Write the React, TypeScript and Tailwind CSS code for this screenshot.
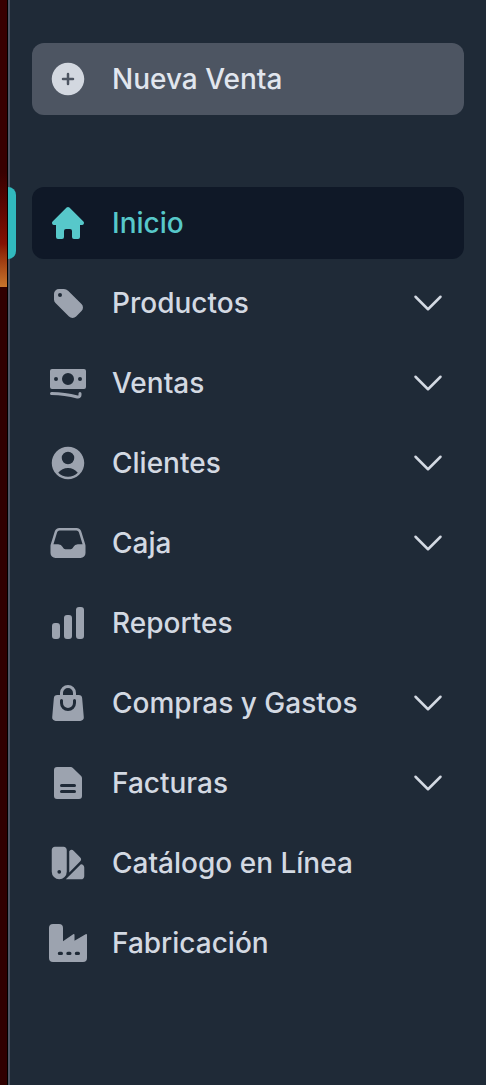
import { clsx } from "clsx";
import type { ComponentType } from "react";
import {
  HiInbox,
  HiMiniBanknotes,
  HiMiniChartBar,
  HiMiniDocumentText,
  HiMiniHome,
  HiMiniShoppingBag,
  HiOutlineChevronDown,
  HiPlusCircle,
  HiSwatch,
  HiUserCircle,
} from "react-icons/hi2";

type IconProps = { className?: string };

type NavItem = {
  label: string;
  icon: ComponentType<IconProps>;
  active?: boolean;
  expandable?: boolean;
};

function TagIcon({ className }: IconProps) {
  return (
    <svg viewBox="0 0 40 40" fill="currentColor" className={className} aria-hidden="true">
      <path
        fillRule="evenodd"
        clipRule="evenodd"
        d="M11 6h4.900a6 6 0 0 1 4.200 1.700L33.500 21a5 5 0 0 1 0 7.100l-5.400 5.400a5 5 0 0 1-7.100 0L7.500 20A5 5 0 0 1 6 16.500V11a5 5 0 0 1 5-5ZM12 14a2 2 0 1 0 0-4 2 2 0 0 0 0 4Z"
      />
    </svg>
  );
}

function FactoryIcon({ className }: IconProps) {
  return (
    <svg viewBox="0 0 40 40" fill="currentColor" className={className} aria-hidden="true">
      <path
        fillRule="evenodd"
        clipRule="evenodd"
        d="M5 1h6a4 4 0 0 1 4 4v13.300L25.200 11.300Q26.500 10.600 26.500 12v5.700L37.600 11.200Q39 10.500 39 12V35a4 4 0 0 1-4 4H5a4 4 0 0 1-4-4V5a4 4 0 0 1 4-4ZM11.400 28.800a1.600 1.600 0 0 0 0 3.200h2a1.600 1.600 0 0 0 0-3.200ZM19.900 28.800a1.600 1.600 0 0 0 0 3.200h2a1.600 1.600 0 0 0 0-3.200ZM28.400 28.800a1.600 1.600 0 0 0 0 3.200h2a1.600 1.600 0 0 0 0-3.200Z"
      />
    </svg>
  );
}

const items: NavItem[] = [
  { label: "Inicio", icon: HiMiniHome, active: true },
  { label: "Productos", icon: TagIcon, expandable: true },
  { label: "Ventas", icon: HiMiniBanknotes, expandable: true },
  { label: "Clientes", icon: HiUserCircle, expandable: true },
  { label: "Caja", icon: HiInbox, expandable: true },
  { label: "Reportes", icon: HiMiniChartBar },
  { label: "Compras y Gastos", icon: HiMiniShoppingBag, expandable: true },
  { label: "Facturas", icon: HiMiniDocumentText, expandable: true },
  { label: "Catálogo en Línea", icon: HiSwatch },
  { label: "Fabricación", icon: FactoryIcon },
];

function NavRow({ label, icon: Icon, active, expandable }: NavItem) {
  return (
    <li className="relative">
      {active && <span className="absolute -left-6 inset-y-0 w-2 rounded-r-lg bg-[#31b9bd]" />}
      <a
        href="#"
        aria-current={active ? "page" : undefined}
        className={clsx(
          "flex h-18 items-center rounded-xl px-4",
          active ? "bg-[#0f1827] text-[#57c8ca]" : "text-[#d3d9e2]"
        )}
      >
        <Icon className={clsx("size-10 shrink-0", !active && "text-[#9ca3af]")} />
        <span className="ml-6 flex-1">{label}</span>
        {expandable && <HiOutlineChevronDown className="size-10 shrink-0" />}
      </a>
    </li>
  );
}

export default function App() {
  return (
    <div className="flex h-[1085px] w-full overflow-hidden bg-[#1f2a37] font-['Inter',sans-serif] text-[28px] leading-10 font-medium">
      {/* Edge of the page behind the sidebar */}
      <div className="flex w-2 shrink-0 flex-col border-r border-black bg-[#300000]">
        <div className="h-[287px] bg-linear-to-b from-[#380000] from-60% via-[#841203] via-85% to-[#c8752c]" />
      </div>

      <aside className="flex-1 border-l-2 border-[#4b5563] pt-[43px] pr-[22px] pl-[22px]">
        <button
          type="button"
          className="flex h-18 w-full items-center rounded-xl bg-[#4d5562] px-4 text-left text-[#e1e6ee]"
        >
          <HiPlusCircle className="size-10 shrink-0 text-[#d3d8e0]" />
          <span className="ml-6">Nueva Venta</span>
        </button>

        <nav className="mt-18">
          <ul className="flex flex-col gap-2">
            {items.map((item) => (
              <NavRow key={item.label} {...item} />
            ))}
          </ul>
        </nav>
      </aside>
    </div>
  );
}
